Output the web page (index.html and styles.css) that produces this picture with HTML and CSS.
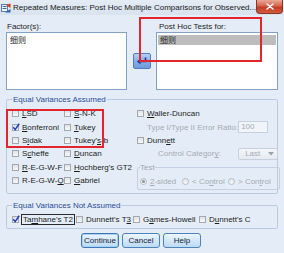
FILE: index.html
```html
<!DOCTYPE html>
<html>
<head>
<meta charset="utf-8">
<link rel="stylesheet" href="styles.css">
</head>
<body>
<div class="window">
  <div class="titlebar">
    <svg class="app-icon" viewBox="0 0 10 10" width="10" height="10">
      <rect x="0.5" y="1.5" width="6" height="7" fill="#f4f7fb" stroke="#5a7fb8"/>
      <rect x="1.5" y="3" width="4" height="1" fill="#3a66b0"/>
      <rect x="1.5" y="5" width="4" height="1" fill="#3a66b0"/>
      <path d="M5 2 L9.5 0.5 L9.5 5 Z" fill="#d8342a"/>
      <path d="M4 9.5 L9.5 9.5 L9.5 6 Z" fill="#2f5fb0"/>
    </svg>
    <span class="title">Repeated Measures: Post Hoc Multiple Comparisons for Observed...</span>
    <div class="close">
      <svg viewBox="0 0 8 7" width="8" height="7">
        <path d="M1 1 L7 6 M7 1 L1 6" stroke="#ffffff" stroke-width="1.6" stroke-linecap="round"/>
      </svg>
    </div>
  </div>

  <div class="main">
    <div class="top">
      <div class="panel panel-left">
        <div class="panel-label">Factor(s):</div>
        <div class="listbox"><div class="item">细则</div></div>
      </div>
      <div class="arrow-col">
        <div class="arrow-btn">
          <svg viewBox="0 0 12 10" width="12" height="10">
            <path d="M9.5 1.5 V5.5 H3.5" fill="none" stroke="#2b2f8f" stroke-width="1.6"/>
            <path d="M1 5.5 L4.5 2.5 L4.5 8.5 Z" fill="#2b2f8f"/>
          </svg>
        </div>
      </div>
      <div class="panel panel-right">
        <div class="panel-label label-right">Post Hoc Tests for:</div>
        <div class="listbox"><div class="item selected">细则</div></div>
      </div>
    </div>

    <fieldset class="group group-assumed">
      <legend>Equal Variances Assumed</legend>
      <div class="assumed-body">
        <div class="check-grid">
          <div class="chk"><span class="box"></span><span><u>L</u>SD</span></div>
          <div class="chk"><span class="box"></span><span><u>S</u>-N-K</span></div>
          <div class="chk"><span class="box checked"><svg viewBox="0 0 8 8" width="8" height="8"><path d="M1.2 4.2 L3.2 6.6 L7.2 0.8" fill="none" stroke="#1f3fb8" stroke-width="1.5"/></svg></span><span><u>B</u>onferroni</span></div>
          <div class="chk"><span class="box"></span><span><u>T</u>ukey</span></div>
          <div class="chk"><span class="box"></span><span>S<u>i</u>dak</span></div>
          <div class="chk"><span class="box"></span><span>Tukey'<u>s</u>-b</span></div>
          <div class="chk"><span class="box"></span><span>S<u>c</u>heffe</span></div>
          <div class="chk"><span class="box"></span><span><u>D</u>uncan</span></div>
          <div class="chk"><span class="box"></span><span><u>R</u>-E-G-W-F</span></div>
          <div class="chk"><span class="box"></span><span><u>H</u>ochberg's GT2</span></div>
          <div class="chk"><span class="box"></span><span>R-E-G-W-<u>Q</u></span></div>
          <div class="chk"><span class="box"></span><span><u>G</u>abriel</span></div>
        </div>
        <div class="right-col">
          <div class="chk"><span class="box"></span><span><u>W</u>aller-Duncan</span></div>
          <div class="param-row ratio-row">
            <span class="dis">Type I/Type II Error Ratio:</span>
            <span class="textbox">100</span>
          </div>
          <div class="chk"><span class="box"></span><span>Dunn<u>e</u>tt</span></div>
          <div class="param-row control-row">
            <span class="dis">Control Categor<u>y</u>:</span>
            <span class="select"><span>Last</span>
              <svg viewBox="0 0 6 4" width="6" height="4"><path d="M0 0 H6 L3 3.5 Z" fill="#9aa3ad"/></svg>
            </span>
          </div>
          <fieldset class="test-group">
            <legend>Test</legend>
            <div class="radio-row">
              <div class="rad"><span class="radio on"></span><span><u>2</u>-sided</span></div>
              <div class="rad"><span class="radio"></span><span>&lt; Co<u>n</u>trol</span></div>
              <div class="rad"><span class="radio"></span><span>&gt; Con<u>t</u>rol</span></div>
            </div>
          </fieldset>
        </div>
      </div>
    </fieldset>

    <fieldset class="group group-not">
      <legend>Equal Variances Not Assumed</legend>
      <div class="not-row">
        <div class="chk"><span class="box checked"><svg viewBox="0 0 8 8" width="8" height="8"><path d="M1.2 4.2 L3.2 6.6 L7.2 0.8" fill="none" stroke="#1f3fb8" stroke-width="1.5"/></svg></span><span class="focus">Ta<u>m</u>hane's T2</span></div>
        <div class="chk"><span class="box"></span><span>Dunnett's T<u>3</u></span></div>
        <div class="chk"><span class="box"></span><span>G<u>a</u>mes-Howell</span></div>
        <div class="chk"><span class="box"></span><span>D<u>u</u>nnett's C</span></div>
      </div>
    </fieldset>

    <div class="buttons">
      <div class="btn default">Continue</div>
      <div class="btn">Cancel</div>
      <div class="btn">Help</div>
    </div>
  </div>

  <div class="mark mark-a"></div>
  <div class="mark mark-b"></div>
</div>
</body>
</html>
```

FILE: styles.css
```css
* { box-sizing: border-box; }
html, body { margin: 0; padding: 0; }
body {
  width: 284px;
  height: 253px;
  overflow: hidden;
  font-family: "Liberation Sans", Arial, "Noto Sans CJK SC", sans-serif;
  font-size: 8px;
  color: #1c1c1c;
}
u { text-decoration-thickness: 1px; text-underline-offset: 1px; }

.window {
  position: relative;
  width: 284px;
  height: 253px;
  background: #e4edf7;
}

.titlebar {
  height: 15px;
  display: flex;
  align-items: center;
  background: linear-gradient(#e4ecf5, #d8e3ef);
}
.app-icon { margin-left: 1px; flex: none; }
.title {
  margin-left: 2px;
  font-size: 8px;
  color: #1a1a1a;
  white-space: nowrap;
}
.close {
  margin-left: auto;
  margin-right: 2px;
  align-self: flex-start;
  width: 27px;
  height: 14px;
  flex: none;
  display: flex;
  align-items: center;
  justify-content: center;
  background: linear-gradient(#eaa898, #d8634c 45%, #c33d26 55%, #d25a3f);
  border: 1px solid #8d3526;
  border-top: none;
  border-radius: 0 0 4px 4px;
}

.main { padding: 0 6px; }

.top {
  display: flex;
  margin-top: 7px;
  height: 68px;
}
.panel-left { width: 121px; }
.arrow-col { width: 29px; }
.panel-right { width: 122px; }
.panel-label {
  height: 10px;
  line-height: 10px;
  padding-left: 1px;
  white-space: nowrap;
}
.label-right { padding-left: 3px; }
.listbox {
  height: 58px;
  background: #ffffff;
  border: 1px solid #82a2c8;
  padding: 1px;
}
.item {
  height: 10px;
  line-height: 10px;
  margin-top: 1px;
  padding-left: 2px;
  font-family: "Noto Sans CJK SC", sans-serif;
  font-size: 8px;
}
.item.selected { background: #bdbdbd; margin-top: 1px; }

.arrow-btn {
  margin: 31px 0 0 6px;
  width: 18px;
  height: 16px;
  border: 1px solid #4f7fc0;
  border-radius: 2px;
  background: linear-gradient(#b7d0f3, #86aee6 50%, #6e9ade);
  display: flex;
  align-items: center;
  justify-content: center;
}

.group {
  margin: 0;
  min-width: 0;
  width: 272px;
  border: 1px solid #bacbe0;
  border-radius: 2px;
}
.group legend {
  padding: 0 1px;
  line-height: 9px;
  color: #2a4b98;
}
.group-assumed {
  margin-top: 5px;
  padding: 3px 1px 3px 5px;
}
.group-not {
  margin-top: 7px;
  padding: 3px 1px 2px 5px;
}

.assumed-body { display: flex; }
.check-grid {
  display: grid;
  grid-template-columns: 52px 73px;
  grid-auto-rows: 13.4px;
}
.chk {
  display: flex;
  align-items: center;
  height: 13.4px;
  white-space: nowrap;
}
.box {
  position: relative;
  width: 7px;
  height: 7px;
  flex: none;
  margin-right: 3px;
  border: 1px solid #a3a8ae;
  background: linear-gradient(#dfe2e6, #f7f8f9);
}
.box svg { position: absolute; left: -1px; top: -2px; }

.right-col {
  flex: 1;
  display: flex;
  flex-direction: column;
}
.dis { color: #a4abb4; white-space: nowrap; }
.param-row {
  height: 13.4px;
  display: flex;
  align-items: center;
}
.ratio-row { padding-left: 10px; }
.control-row { padding-left: 21px; }
.textbox {
  margin-left: auto;
  margin-right: 12px;
  width: 30px;
  height: 12px;
  line-height: 10px;
  padding-left: 2px;
  color: #a4abb4;
  background: #f1f4f8;
  border: 1px solid #c6d1dd;
}
.select {
  margin-left: auto;
  margin-right: 2px;
  width: 40px;
  height: 12px;
  display: flex;
  align-items: center;
  justify-content: space-between;
  padding: 0 3px 0 6px;
  color: #a4abb4;
  background: linear-gradient(#f4f6f9, #e6ebf1);
  border: 1px solid #c6d1dd;
  border-radius: 2px;
}

.test-group {
  margin: 2px 0 0 0;
  min-width: 0;
  padding: 3px 0 1px 2px;
  border: 1px solid #c3d1e2;
  border-radius: 2px;
}
.test-group legend {
  padding: 0;
  line-height: 9px;
  color: #a0a7b0;
}
.radio-row {
  display: grid;
  grid-template-columns: 42px 46px auto;
  height: 13px;
  color: #a4abb4;
}
.rad {
  display: flex;
  align-items: center;
  white-space: nowrap;
}
.radio {
  position: relative;
  width: 7px;
  height: 7px;
  flex: none;
  margin-right: 3px;
  border-radius: 50%;
  border: 1px solid #b6bdc5;
  background: linear-gradient(#e2e5e9, #f7f8f9);
}
.radio.on::after {
  content: "";
  position: absolute;
  left: 1px;
  top: 1px;
  width: 3px;
  height: 3px;
  border-radius: 50%;
  background: #8c939b;
}

.not-row {
  display: grid;
  grid-template-columns: 64px 57px 66px auto;
}
.not-row .chk { height: 13px; }
.focus {
  border: 1px solid #2a2a2a;
  padding: 0 1px;
  line-height: 9px;
  margin-left: -1px;
}

.buttons {
  display: flex;
  justify-content: center;
  gap: 3px;
  margin-top: 4px;
  padding-right: 2px;
}
.btn {
  width: 38px;
  height: 15px;
  line-height: 13px;
  text-align: center;
  color: #14233a;
  border: 1px solid #4b83bd;
  border-radius: 3px;
  background: linear-gradient(#eef6fe, #d3e7f9 50%, #bcdaf4);
}
.btn.default { border-color: #3a79bd; box-shadow: inset 0 0 0 1px #a9d2f5; }

.mark {
  position: absolute;
  border: 2px solid #e3262b;
}
.mark-a { left: 139px; top: 17px; width: 123px; height: 45px; }
.mark-b { left: 6px; top: 109px; width: 98px; height: 39px; }
```
